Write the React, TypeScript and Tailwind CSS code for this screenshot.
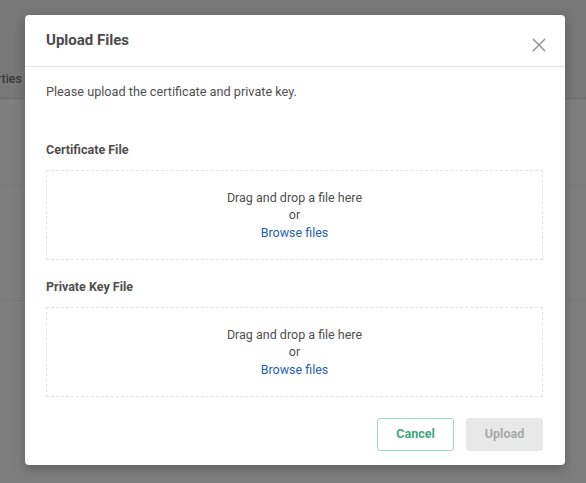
import React from "react";

function DropZone() {
  return (
    <div className="mt-[11px] flex h-[90px] flex-col items-center justify-center border border-dashed border-[#e3e3e3] text-[12.5px] leading-[17.5px] text-[#4f4f4f]">
      <span>Drag and drop a file here</span>
      <span>or</span>
      <button className="text-[#1f5fae]">Browse files</button>
    </div>
  );
}

export default function App() {
  return (
    <div
      className="relative h-[483px] w-[586px] overflow-hidden bg-[#7d7e7d]"
      style={{ fontFamily: "Roboto, 'Liberation Sans', sans-serif" }}
    >
      {/* dimmed page behind the dialog */}
      <div className="flex h-[99px] items-end border-b border-[#6b6b6b] bg-[#777877] pb-[10px]">
        <div className="flex w-[22px] justify-end">
          <span className="whitespace-nowrap text-[12.5px] font-medium leading-[18px] text-[#3a3a3a]">Properties</span>
        </div>
      </div>
      <div className="h-[87px] border-b border-[#777]" />
      <div className="h-[115px] border-b border-[#777]" />

      {/* dialog */}
      <div className="absolute left-[25px] top-[15px] flex h-[450px] w-[540px] flex-col rounded-[4px] bg-white shadow-[0_4px_12px_rgba(0,0,0,0.25)]">
        <div className="flex h-[52px] shrink-0 items-center justify-between border-b border-[#e2e2e2] pl-[21px] pr-[19px]">
          <h2 className="mt-[-1px] text-[15px] font-bold text-[#4a4a4a]">Upload Files</h2>
          <button className="mt-[8px] text-[#8a8a8a]" aria-label="Close">
            <svg width="14" height="14" viewBox="0 0 14 14" fill="none" stroke="currentColor" strokeWidth="1.4">
              <path d="M1 1l12 12M13 1L1 13" />
            </svg>
          </button>
        </div>
        <div className="flex flex-1 flex-col pl-[21px] pr-[22px]">
          <p className="mt-[16px] text-[12.7px] leading-[18px] text-[#4f4f4f]">
            Please upload the certificate and private key.
          </p>
          <h3 className="mt-[40px] text-[12.5px] font-bold leading-[18px] text-[#4f4f4f]">Certificate File</h3>
          <DropZone />
          <h3 className="mt-[18px] text-[12.5px] font-bold leading-[18px] text-[#4f4f4f]">Private Key File</h3>
          <DropZone />
          <div className="mt-[21px] flex justify-end gap-[12px]">
            <button className="h-[33px] w-[77px] rounded-[3px] border border-[#9dd8c4] text-[12.5px] font-bold text-[#3fa77d]">
              Cancel
            </button>
            <button className="h-[33px] w-[77px] rounded-[3px] bg-[#e8e8e8] text-[12.5px] font-bold text-[#a9a9a9]">
              Upload
            </button>
          </div>
        </div>
      </div>
    </div>
  );
}
